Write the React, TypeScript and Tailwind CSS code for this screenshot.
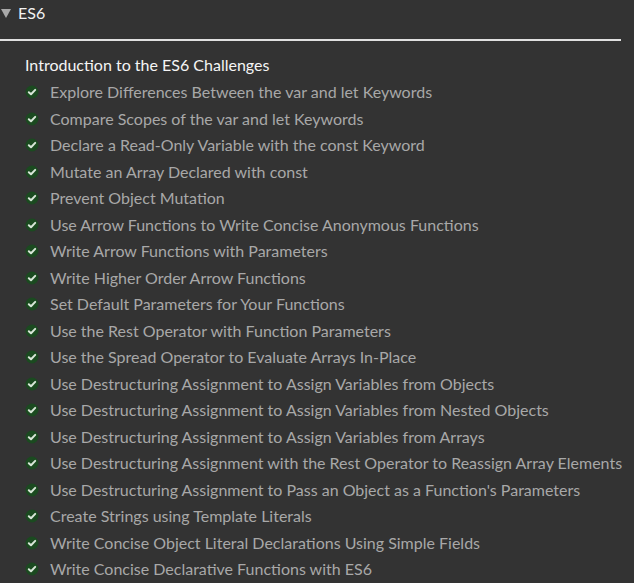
import React from "react";

const challenges: string[] = [
  "Explore Differences Between the var and let Keywords",
  "Compare Scopes of the var and let Keywords",
  "Declare a Read-Only Variable with the const Keyword",
  "Mutate an Array Declared with const",
  "Prevent Object Mutation",
  "Use Arrow Functions to Write Concise Anonymous Functions",
  "Write Arrow Functions with Parameters",
  "Write Higher Order Arrow Functions",
  "Set Default Parameters for Your Functions",
  "Use the Rest Operator with Function Parameters",
  "Use the Spread Operator to Evaluate Arrays In-Place",
  "Use Destructuring Assignment to Assign Variables from Objects",
  "Use Destructuring Assignment to Assign Variables from Nested Objects",
  "Use Destructuring Assignment to Assign Variables from Arrays",
  "Use Destructuring Assignment with the Rest Operator to Reassign Array Elements",
  "Use Destructuring Assignment to Pass an Object as a Function's Parameters",
  "Create Strings using Template Literals",
  "Write Concise Object Literal Declarations Using Simple Fields",
  "Write Concise Declarative Functions with ES6",
];

const CheckIcon = () => (
  <svg width="14" height="14" viewBox="0 0 14 14" className="shrink-0">
    <circle cx="7" cy="7" r="6.5" fill="#1b4a20" />
    <path
      d="M3.8 7.2 L6 9.3 L10.2 4.9"
      fill="none"
      stroke="#d8e6d8"
      strokeWidth="2"
      strokeLinecap="round"
      strokeLinejoin="round"
    />
  </svg>
);

const App = () => {
  return (
    <div
      className="w-[634px] h-[583px] overflow-hidden bg-[#333333]"
      style={{ fontFamily: "Lato, 'Open Sans', sans-serif" }}
    >
      <div className="flex items-center h-[26px]">
        <svg width="10" height="9" viewBox="0 0 10 9" className="ml-[1px] mr-[7px]">
          <path d="M0 0 H10 L5 9 Z" fill="#a9a9a9" />
        </svg>
        <span className="text-[#f2f2f2] text-[16px]">ES6</span>
      </div>
      <div className="mt-[13px] mr-[13px] h-[2px] bg-[#e0e0e0]" />
      <div className="pl-[25px] pt-[13px]">
        <h4 className="text-[#f5f5f5] text-[16px] leading-[22px] mb-[3px]">
          Introduction to the ES6 Challenges
        </h4>
        <ul className="flex flex-col">
          {challenges.map((title, index) => {
            return (
              <li key={title + index} className="flex items-center h-[26.5px] gap-[11px]">
                <CheckIcon />
                <span className="text-[#a8a8a8] text-[16px] whitespace-nowrap">{title}</span>
              </li>
            );
          })}
        </ul>
      </div>
    </div>
  );
};

export default App;
